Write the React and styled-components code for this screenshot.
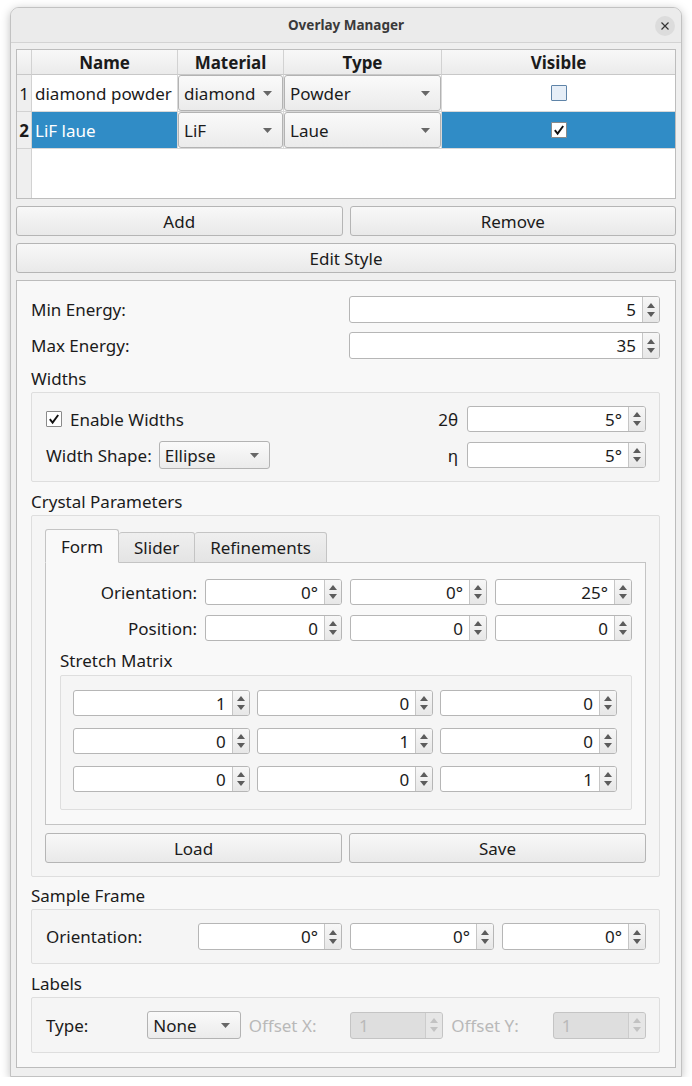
import React from 'react';
import styled, { createGlobalStyle } from 'styled-components';

const GlobalStyle = createGlobalStyle`
  html, body {
    margin: 0;
    padding: 0;
    background: #ffffff;
  }
  body {
    font-family: 'Noto Sans', 'Open Sans', sans-serif;
    font-size: 17px;
    color: #1b1b1b;
  }
  * {
    box-sizing: border-box;
  }
`;

const Window = styled.div`
  margin: 7px 0 0 10px;
  width: 672px;
  height: 1070px;
  border: 1px solid #c2c2c2;
  border-radius: 9px 9px 0 0;
  background: #efefef;
  box-shadow: 0 2px 10px rgba(0, 0, 0, 0.25);
  display: flex;
  flex-direction: column;
  overflow: hidden;
`;

const TitleBar = styled.div`
  position: relative;
  height: 35px;
  flex: none;
  display: flex;
  align-items: center;
  justify-content: center;
  background: #ebebeb;
  border-bottom: 1px solid #d3d3d3;
  font-size: 13.5px;
  font-weight: 700;
  color: #3a3a3a;
`;

const CloseButton = styled.div`
  position: absolute;
  right: 6px;
  top: 8px;
  width: 20px;
  height: 20px;
  border-radius: 50%;
  background: #dcdcdc;
  display: flex;
  align-items: center;
  justify-content: center;
`;

const Body = styled.div`
  flex: 1;
  display: flex;
  flex-direction: column;
  gap: 7px;
  padding: 6px 5px 8px 5px;
`;

/* ---------- table ---------- */

const Table = styled.div`
  height: 150px;
  flex: none;
  border: 1px solid #bdbdbd;
  background: #ffffff;
  display: grid;
  grid-template-columns: 15px 146px 106px 158px 1fr;
  grid-template-rows: 25px 37px 37px 1fr;
`;

const HeaderCell = styled.div`
  display: flex;
  align-items: center;
  justify-content: center;
  font-weight: 700;
  background: linear-gradient(#f8f8f8, #ebebeb);
  border-right: ${({ $last }) => ($last ? 'none' : '1px solid #d2d2d2')};
  border-bottom: 1px solid #c8c8c8;
`;

const RowHeader = styled.div`
  display: flex;
  align-items: center;
  justify-content: center;
  background: #efefef;
  border-right: 1px solid #d2d2d2;
  border-bottom: ${({ $empty }) => ($empty ? 'none' : '1px solid #d2d2d2')};
  font-weight: ${({ $current }) => ($current ? 700 : 400)};
`;

const Cell = styled.div`
  display: flex;
  align-items: center;
  justify-content: ${({ $center }) => ($center ? 'center' : 'flex-start')};
  padding: 0 ${({ $center }) => ($center ? 0 : 3)}px;
  background: ${({ $selected }) => ($selected ? '#308cc6' : '#ffffff')};
  color: ${({ $selected }) => ($selected ? '#ffffff' : '#1b1b1b')};
  border-right: ${({ $last }) => ($last ? 'none' : '1px solid #d8d8d8')};
  border-bottom: 1px solid #d8d8d8;
  white-space: nowrap;
  overflow: hidden;
`;

const ComboCell = styled.div`
  border-right: 1px solid #d8d8d8;
  border-bottom: 1px solid #d8d8d8;
  display: flex;
`;

const EmptyArea = styled.div`
  grid-column: 2 / -1;
  background: #ffffff;
`;

/* ---------- generic widgets ---------- */

const Button = styled.div`
  height: 30px;
  display: flex;
  align-items: center;
  justify-content: center;
  border: 1px solid #b5b5b5;
  border-radius: 3px;
  background: linear-gradient(#f8f8f8, #e9e9e9);
  color: #1b1b1b;
`;

const ButtonRow = styled.div`
  display: grid;
  grid-template-columns: 1fr 1fr;
  gap: 7px;
  margin-top: ${({ $mt }) => $mt || 0}px;
`;

const ComboBox = styled.div`
  height: ${({ $h }) => $h || 28}px;
  flex: ${({ $fill }) => ($fill ? 1 : 'none')};
  width: ${({ $w }) => ($w ? `${$w}px` : 'auto')};
  display: flex;
  align-items: center;
  justify-content: space-between;
  padding: 0 10px 0 5px;
  border: 1px solid #b3b3b3;
  border-radius: 3px;
  background: linear-gradient(#fafafa, #ebebeb);
  color: #1b1b1b;
`;

const SpinFrame = styled.div`
  height: ${({ $h }) => $h || 26}px;
  display: flex;
  border: 1px solid ${({ $disabled }) => ($disabled ? '#c4c4c4' : '#b6b6b6')};
  border-radius: 3px;
  background: ${({ $disabled }) => ($disabled ? '#dedede' : '#ffffff')};
  overflow: hidden;
`;

const SpinValue = styled.div`
  flex: 1;
  display: flex;
  align-items: center;
  justify-content: ${({ $disabled }) => ($disabled ? 'flex-start' : 'flex-end')};
  padding: 0 6px 0 8px;
  color: ${({ $disabled }) => ($disabled ? '#b9b9b9' : '#1b1b1b')};
`;

const SpinArrows = styled.div`
  width: 17px;
  flex: none;
  display: flex;
  align-items: center;
  justify-content: center;
  border-left: 1px solid ${({ $disabled }) => ($disabled ? '#cccccc' : '#c6c6c6')};
  background: ${({ $disabled }) =>
    $disabled ? '#e6e6e6' : 'linear-gradient(#f7f7f7, #e7e7e7)'};
`;

const CheckFrame = styled.div`
  width: 16px;
  height: 16px;
  flex: none;
  border: 1px solid ${({ $tint }) => ($tint ? '#5f84a8' : '#8a8a8a')};
  background: ${({ $tint }) => ($tint ? '#e6eef7' : '#ffffff')};
  border-radius: 1px;
  display: flex;
  align-items: center;
  justify-content: center;
`;

const SpinBox = ({ value, disabled, h }) => (
  <SpinFrame $disabled={disabled} $h={h}>
    <SpinValue $disabled={disabled}>{value}</SpinValue>
    <SpinArrows $disabled={disabled}>
      <svg width="12" height="18" viewBox="0 0 12 18">
        <polygon points="2,7 6,2 10,7" fill={disabled ? '#c2c2c2' : '#5c5c5c'} />
        <polygon points="2,11 10,11 6,16" fill={disabled ? '#c2c2c2' : '#5c5c5c'} />
      </svg>
    </SpinArrows>
  </SpinFrame>
);

const Combo = ({ value, w, h, fill }) => (
  <ComboBox $w={w} $h={h} $fill={fill}>
    <span>{value}</span>
    <svg width="9" height="5" viewBox="0 0 9 5">
      <polygon points="0,0 9,0 4.5,5" fill="#676767" />
    </svg>
  </ComboBox>
);

const CheckBox = ({ checked, tint }) => (
  <CheckFrame $tint={tint}>
    {checked && (
      <svg width="12" height="12" viewBox="0 0 12 12">
        <path d="M1.8 6.2 L4.6 9.6 L10.2 2" fill="none" stroke="#111" strokeWidth="1.9" />
      </svg>
    )}
  </CheckFrame>
);

/* ---------- settings frame ---------- */

const SettingsFrame = styled.div`
  flex: 1;
  border: 1px solid #bcbcbc;
  background: #f8f8f8;
  padding: 15px 15px 14px 14px;
  display: flex;
  flex-direction: column;
`;

const EnergyRow = styled.div`
  display: grid;
  grid-template-columns: 1fr 311px;
  align-items: center;
  margin-bottom: ${({ $mb }) => $mb || 0}px;
`;

const SectionTitle = styled.div`
  line-height: 23px;
  margin: ${({ $mt }) => $mt ?? 8}px 0 2px;
`;

const GroupBox = styled.div`
  border: 1px solid #dedede;
  border-radius: 2px;
  background: #f5f5f5;
  padding: ${({ $pad }) => $pad || '13px 13px 13px 14px'};
`;

const WidthsGrid = styled.div`
  display: grid;
  grid-template-columns: 1fr auto 179px;
  grid-template-rows: 26px 26px;
  column-gap: 9px;
  row-gap: 10px;
  align-items: center;
`;

const CheckLabel = styled.div`
  display: flex;
  align-items: center;
  gap: 8px;
`;

const InlineField = styled.div`
  display: flex;
  align-items: center;
  gap: 7px;
`;

const RightLabel = styled.div`
  text-align: right;
`;

const TabBar = styled.div`
  display: flex;
  align-items: flex-end;
  height: 34px;
  position: relative;
  z-index: 1;
`;

const Tab = styled.div`
  height: ${({ $active }) => ($active ? 34 : 31)}px;
  padding: 0 15px;
  display: flex;
  align-items: center;
  border: 1px solid #c4c4c4;
  border-left: ${({ $first, $active }) => ($first || $active ? '1px solid #c4c4c4' : 'none')};
  border-bottom: ${({ $active }) => ($active ? '1px solid #f9f9f9' : '1px solid #c4c4c4')};
  border-radius: 3px 3px 0 0;
  background: ${({ $active }) => ($active ? '#f9f9f9' : 'linear-gradient(#efefef, #e4e4e4)')};
  margin-bottom: -1px;
`;

const TabPane = styled.div`
  border: 1px solid #c4c4c4;
  background: #f9f9f9;
  padding: 16px 13px 14px 14px;
`;

const FourGrid = styled.div`
  display: grid;
  grid-template-columns: repeat(4, 1fr);
  column-gap: 8px;
  row-gap: 10px;
  align-items: center;
`;

const SixGrid = styled.div`
  display: grid;
  grid-template-columns: repeat(6, 1fr);
  column-gap: 8px;
  align-items: center;
`;

const MatrixGrid = styled.div`
  display: grid;
  grid-template-columns: repeat(3, 1fr);
  column-gap: 7px;
  row-gap: 12px;
`;

const SubTitle = styled.div`
  line-height: 23px;
  margin: 8px 0 3px;
`;

const MutedLabel = styled.div`
  color: #b9b9b9;
`;

const orientation = ['0°', '0°', '25°'];
const position = ['0', '0', '0'];
const stretch = ['1', '0', '0', '0', '1', '0', '0', '0', '1'];

const App = () => (
  <React.Fragment>
    <GlobalStyle />
    <Window>
      <TitleBar>
        Overlay Manager
        <CloseButton>
          <svg width="10" height="10" viewBox="0 0 10 10">
            <path d="M1.5 1.5 L8.5 8.5 M8.5 1.5 L1.5 8.5" stroke="#333" strokeWidth="1.2" />
          </svg>
        </CloseButton>
      </TitleBar>
      <Body>
        <Table>
          <HeaderCell />
          <HeaderCell>Name</HeaderCell>
          <HeaderCell>Material</HeaderCell>
          <HeaderCell>Type</HeaderCell>
          <HeaderCell $last>Visible</HeaderCell>

          <RowHeader>1</RowHeader>
          <Cell>diamond powder</Cell>
          <ComboCell>
            <Combo value="diamond" h={36} fill />
          </ComboCell>
          <ComboCell>
            <Combo value="Powder" h={36} fill />
          </ComboCell>
          <Cell $center $last>
            <CheckBox tint />
          </Cell>

          <RowHeader $current>2</RowHeader>
          <Cell $selected>LiF laue</Cell>
          <ComboCell>
            <Combo value="LiF" h={36} fill />
          </ComboCell>
          <ComboCell>
            <Combo value="Laue" h={36} fill />
          </ComboCell>
          <Cell $center $last $selected>
            <CheckBox checked />
          </Cell>

          <RowHeader $empty />
          <EmptyArea />
        </Table>

        <ButtonRow>
          <Button>Add</Button>
          <Button>Remove</Button>
        </ButtonRow>
        <Button>Edit Style</Button>

        <SettingsFrame>
          <EnergyRow $mb={9}>
            <span>Min Energy:</span>
            <SpinBox value="5" h={27} />
          </EnergyRow>
          <EnergyRow>
            <span>Max Energy:</span>
            <SpinBox value="35" h={27} />
          </EnergyRow>

          <SectionTitle>Widths</SectionTitle>
          <GroupBox>
            <WidthsGrid>
              <CheckLabel>
                <CheckBox checked />
                Enable Widths
              </CheckLabel>
              <RightLabel>2θ</RightLabel>
              <SpinBox value="5°" />
              <InlineField>
                Width Shape:
                <Combo value="Ellipse" w={111} />
              </InlineField>
              <RightLabel>η</RightLabel>
              <SpinBox value="5°" />
            </WidthsGrid>
          </GroupBox>

          <SectionTitle>Crystal Parameters</SectionTitle>
          <GroupBox $pad="12px 13px 13px 13px">
            <TabBar>
              <Tab $active $first>Form</Tab>
              <Tab>Slider</Tab>
              <Tab>Refinements</Tab>
            </TabBar>
            <TabPane>
              <FourGrid>
                <RightLabel>Orientation:</RightLabel>
                {orientation.map((v, i) => (
                  <SpinBox key={`o${i}`} value={v} />
                ))}
                <RightLabel>Position:</RightLabel>
                {position.map((v, i) => (
                  <SpinBox key={`p${i}`} value={v} />
                ))}
              </FourGrid>
              <SubTitle>Stretch Matrix</SubTitle>
              <GroupBox $pad="14px 14px 17px 12px">
                <MatrixGrid>
                  {stretch.map((v, i) => (
                    <SpinBox key={`s${i}`} value={v} />
                  ))}
                </MatrixGrid>
              </GroupBox>
            </TabPane>
            <ButtonRow $mt={8}>
              <Button>Load</Button>
              <Button>Save</Button>
            </ButtonRow>
          </GroupBox>

          <SectionTitle $mt={7}>Sample Frame</SectionTitle>
          <GroupBox $pad="13px 13px 13px 14px">
            <FourGrid>
              <span>Orientation:</span>
              <SpinBox value="0°" h={27} />
              <SpinBox value="0°" h={27} />
              <SpinBox value="0°" h={27} />
            </FourGrid>
          </GroupBox>

          <SectionTitle>Labels</SectionTitle>
          <GroupBox $pad="13px 13px 13px 14px">
            <SixGrid>
              <span>Type:</span>
              <Combo value="None" h={28} />
              <MutedLabel>Offset X:</MutedLabel>
              <SpinBox value="1" disabled h={27} />
              <MutedLabel>Offset Y:</MutedLabel>
              <SpinBox value="1" disabled h={27} />
            </SixGrid>
          </GroupBox>
        </SettingsFrame>
      </Body>
    </Window>
  </React.Fragment>
);

export default App;
